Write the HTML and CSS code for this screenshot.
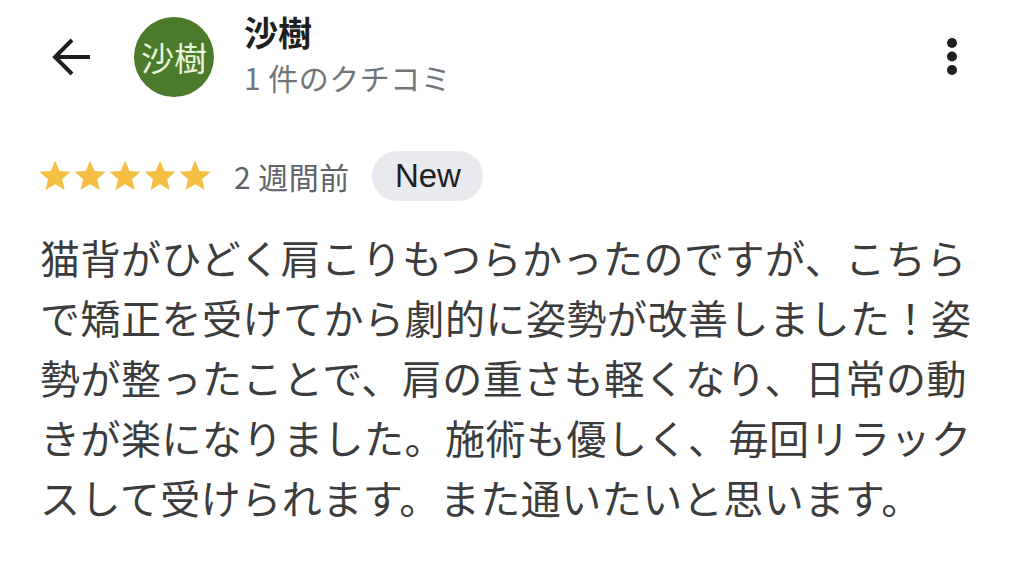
FILE: index.html
```html
<!DOCTYPE html>
<html lang="ja">
<head>
<meta charset="utf-8">
<link rel="stylesheet" href="styles.css">
</head>
<body>
<div class="header">
  <svg class="back" viewBox="0 0 40 40" width="40" height="40"><path d="M38 20H4M20 3L3 20l17 17" fill="none" stroke="#1f1f1f" stroke-width="4"/></svg>
  <div class="avatar">沙樹</div>
  <div class="who">
    <div class="name">沙樹</div>
    <div class="count">1 件のクチコミ</div>
  </div>
  <svg class="more" viewBox="0 0 12 40" width="12" height="40"><circle cx="6" cy="6" r="5" fill="#1f1f1f"/><circle cx="6" cy="19.5" r="5" fill="#1f1f1f"/><circle cx="6" cy="33" r="5" fill="#1f1f1f"/></svg>
</div>
<div class="meta">
  <svg class="stars" viewBox="0 0 175 30" width="175" height="30">
    <defs><path id="s" d="M12 17.27L18.18 21l-1.64-7.03L22 9.24l-7.19-.61L12 2 9.19 8.63 2 9.24l5.46 4.73L5.82 21z" fill="#f4bf42"/></defs>
    <g transform="translate(-3.5 -3.5) scale(1.55)"><use href="#s"/></g>
    <g transform="translate(31.5 -3.5) scale(1.55)"><use href="#s"/></g>
    <g transform="translate(66.5 -3.5) scale(1.55)"><use href="#s"/></g>
    <g transform="translate(101.5 -3.5) scale(1.55)"><use href="#s"/></g>
    <g transform="translate(136.5 -3.5) scale(1.55)"><use href="#s"/></g>
  </svg>
  <span class="ago">2 週間前</span>
  <span class="pill">New</span>
</div>
<p class="text">猫背がひどく肩こりもつらかったのですが、こちらで矯正を受けてから劇的に姿勢が改善しました！姿勢が整ったことで、肩の重さも軽くなり、日常の動きが楽になりました。施術も優しく、毎回リラックスして受けられます。また通いたいと思います。</p>
</body>
</html>
```
FILE: styles.css
```css
html, body {
  margin: 0;
  background: #fff;
}
body {
  width: 1024px;
  font-family: "Noto Sans CJK JP", "Liberation Sans", sans-serif;
}
.header {
  display: flex;
  align-items: center;
  height: 114px;
  padding-left: 52px;
}
.back {
  flex: none;
}
.avatar {
  flex: none;
  margin-left: 42px;
  width: 80px;
  height: 80px;
  border-radius: 50%;
  background: #4b7a2b;
  color: #e8f4dc;
  font-size: 33px;
  display: flex;
  align-items: center;
  justify-content: center;
}
.who {
  align-self: flex-start;
  margin: 14px 0 0 30px;
}
.name {
  font-size: 34px;
  font-weight: 700;
  line-height: 36px;
  height: 36px;
  margin-bottom: 8px;
  color: #1f1f1f;
}
.count {
  font-size: 30px;
  line-height: 38px;
  height: 38px;
  color: #70757a;
  letter-spacing: 0.5px;
}
.more {
  margin-left: auto;
  margin-right: 66px;
}
.meta {
  display: flex;
  align-items: center;
  height: 50px;
  margin-top: 37px;
  padding-left: 40px;
}
.stars {
  flex: none;
}
.ago {
  margin-left: 19px;
  font-size: 30px;
  color: #5f6368;
  letter-spacing: 0.5px;
}
.pill {
  margin-left: 22px;
  height: 50px;
  padding: 0 22px 0 23px;
  border-radius: 25px;
  background: #e8eaed;
  color: #1f1f1f;
  font-family: "Liberation Sans", sans-serif;
  font-size: 33px;
  display: flex;
  align-items: center;
}
.text {
  margin: 26px 0 0;
  padding-left: 40px;
  width: 935px;
  font-size: 40px;
  line-height: 60px;
  letter-spacing: 0.5px;
  color: #3c3c3c;
}
```
